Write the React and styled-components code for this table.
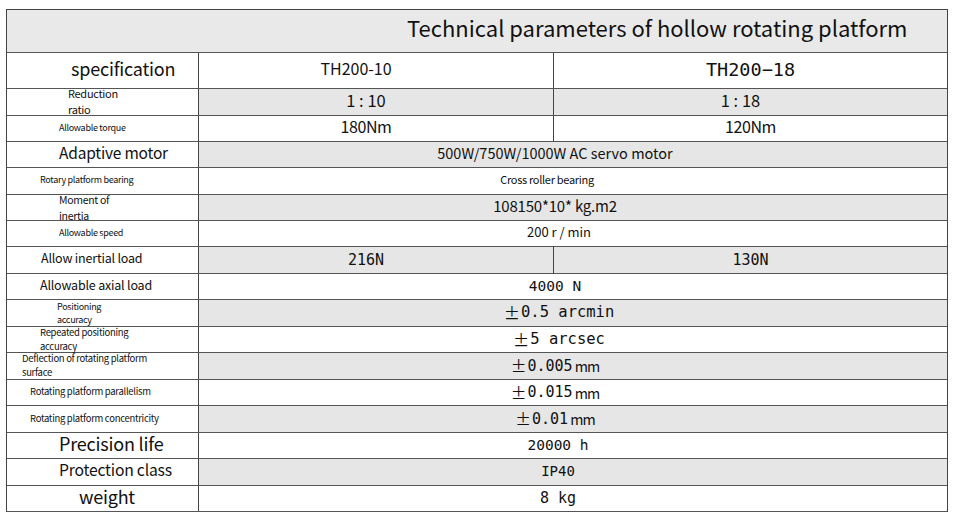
import React from "react";
import styled, { createGlobalStyle } from "styled-components";

const GlobalStyle = createGlobalStyle`
  html, body {
    margin: 0;
    padding: 0;
    background: #ffffff;
  }
  body {
    font-family: "Noto Sans CJK SC", "Noto Sans", sans-serif;
    color: #111111;
  }
`;

const Page = styled.div`
  width: 958px;
  height: 519px;
  padding: 9px 0 0 6px;
  box-sizing: border-box;
  background: #fff;
`;

const Sheet = styled.div`
  width: 942px;
  border: 1px solid #444;
  border-bottom: none;
  box-sizing: border-box;
`;

const TitleRow = styled.div`
  height: 43px;
  background: #e9e9e9;
  border-bottom: 1px solid #555;
  box-sizing: border-box;
  display: flex;
  align-items: center;
  padding: 0 0 7px 400px;
  font-size: 22px;
  line-height: 1.1;
  white-space: nowrap;
`;

const Row = styled.div`
  display: grid;
  grid-template-columns: 191px 355px 1fr;
  grid-template-rows: 100%;
  height: ${(p) => p.$h}px;
  border-bottom: 1px solid #555;
  box-sizing: border-box;
`;

const Label = styled.div`
  display: flex;
  flex-direction: column;
  justify-content: center;
  min-height: 0;
  padding-left: ${(p) => p.$indent}px;
  padding-bottom: ${(p) => (p.$lines ? 0 : p.$size >= 12 ? 4 : 2)}px;
  box-sizing: border-box;
  font-size: ${(p) => p.$size}px;
  line-height: ${(p) => (p.$lines ? "1.45" : "1.1")};
  letter-spacing: ${(p) => (p.$size < 12 ? "-0.3px" : "-0.2px")};
  white-space: nowrap;
`;

const Value = styled.div`
  grid-column: ${(p) => (p.$wide ? "2 / 4" : "auto")};
  display: flex;
  align-items: center;
  justify-content: center;
  box-sizing: border-box;
  border-left: 1px solid #444;
  background: ${(p) => (p.$shade ? "#e6e6e6" : "#fff")};
  padding-right: ${(p) => p.$shift || 0}px;
  padding-bottom: ${(p) => (p.$mono ? 0 : 3)}px;
  font-family: ${(p) =>
    p.$mono
      ? '"DejaVu Sans Mono", "Liberation Mono", monospace'
      : '"Noto Sans CJK SC", "Noto Sans", sans-serif'};
  font-size: ${(p) => p.$size}px;
  line-height: 1.1;
  letter-spacing: ${(p) => p.$track || 0}px;
  white-space: pre;
`;

const Pm = styled.span`
  font-family: "Noto Sans CJK SC", sans-serif;
  font-size: 1.05em;
  margin-right: 1px;
`;

const Unit = styled.span`
  font-family: "Noto Sans CJK SC", sans-serif;
  font-size: 0.95em;
  letter-spacing: -1px;
`;

const rows = [
  {
    label: ["Reduction", "ratio"],
    size: 11,
    indent: 61,
    values: ["1 : 10", "1 : 18"],
    vsize: 16.5,
    shifts: [20, 20],
  },
  {
    label: ["Allowable torque"],
    size: 9,
    indent: 52,
    values: ["180Nm", "120Nm"],
    vsize: 16,
    track: -0.4,
    shifts: [20, -6],
  },
  {
    label: ["Adaptive motor"],
    size: 15.5,
    indent: 52,
    wide: "500W/750W/1000W AC servo motor",
    vsize: 14.5,
  },
  {
    label: ["Rotary platform bearing"],
    size: 9,
    indent: 33,
    wide: "Cross roller bearing",
    vsize: 11,
    track: -0.3,
    wshift: 52,
  },
  {
    label: ["Moment of", "inertia"],
    size: 10.5,
    indent: 52,
    wide: "108150*10* kg.m2",
    vsize: 15,
    track: -0.2,
  },
  {
    label: ["Allowable speed"],
    size: 9,
    indent: 52,
    wide: "200 r / min",
    vsize: 13,
    wshift: 28,
  },
  {
    label: ["Allow inertial load"],
    size: 12.5,
    indent: 34,
    values: ["216N", "130N"],
    vsize: 15,
    mono: true,
    shifts: [20, -8],
  },
  {
    label: ["Allowable axial load"],
    size: 12.5,
    indent: 33,
    wide: "4000 N",
    vsize: 14.5,
    mono: true,
  },
  {
    label: ["Positioning", "accuracy"],
    size: 9,
    indent: 50,
    wide: "0.5 arcmin",
    pm: true,
    vsize: 15.5,
    mono: true,
    wshift: 28,
  },
  {
    label: ["Repeated positioning", "accuracy"],
    size: 9.5,
    indent: 33,
    wide: "5 arcsec",
    pm: true,
    vsize: 15.5,
    mono: true,
    wshift: 28,
  },
  {
    label: ["Deflection of rotating platform", "surface"],
    size: 9.5,
    indent: 15,
    wide: "0.005",
    pm: true,
    unit: "mm",
    vsize: 15,
    mono: true,
  },
  {
    label: ["Rotating platform parallelism"],
    size: 9.5,
    indent: 23,
    wide: "0.015",
    pm: true,
    unit: "mm",
    vsize: 15,
    mono: true,
  },
  {
    label: ["Rotating platform concentricity"],
    size: 9.5,
    indent: 23,
    wide: "0.01",
    pm: true,
    unit: "mm",
    vsize: 15,
    mono: true,
  },
  {
    label: ["Precision life"],
    size: 18,
    indent: 52,
    wide: "20000 h",
    vsize: 14.5,
    mono: true,
    wshift: 30,
  },
  {
    label: ["Protection class"],
    size: 15.7,
    indent: 52,
    wide: "IP40",
    vsize: 14,
    mono: true,
    wshift: 30,
  },
  {
    label: ["weight"],
    size: 18,
    indent: 72,
    wide: "8 kg",
    vsize: 15,
    mono: true,
    wshift: 30,
  },
];

const heights = [27, 26, 26, 27, 26, 26, 27, 26, 27, 26, 27, 26, 27, 26, 27, 26];

const renderValue = (r) => (
  <>
    {r.pm && <Pm>±</Pm>}
    {r.wide}
    {r.unit && <Unit> {r.unit}</Unit>}
  </>
);

const App = () => (
  <Page>
    <GlobalStyle />
    <Sheet>
      <TitleRow>Technical parameters of hollow rotating platform</TitleRow>
      <Row $h={36}>
        <Label $size={18} $indent={64}>
          specification
        </Label>
        <Value $size={16} $shift={40}>
          TH200-10
        </Value>
        <Value $size={18.5} $mono>
          TH200−18
        </Value>
      </Row>
      {rows.map((r, i) => (
        <Row key={i} $h={heights[i]}>
          <Label $size={r.size} $indent={r.indent} $lines={r.label.length > 1}>
            {r.label.map((line) => (
              <span key={line}>{line}</span>
            ))}
          </Label>
          {r.wide ? (
            <Value
              $wide
              $shade={i % 2 === 0}
              $size={r.vsize}
              $mono={r.mono}
              $track={r.track}
              $shift={r.wshift || 36}
            >
              {renderValue(r)}
            </Value>
          ) : (
            r.values.map((v, j) => (
              <Value
                key={v}
                $shade={i % 2 === 0}
                $size={r.vsize}
                $mono={r.mono}
                $track={r.track}
                $shift={r.shifts[j]}
              >
                {v}
              </Value>
            ))
          )}
        </Row>
      ))}
    </Sheet>
  </Page>
);

export default App;
